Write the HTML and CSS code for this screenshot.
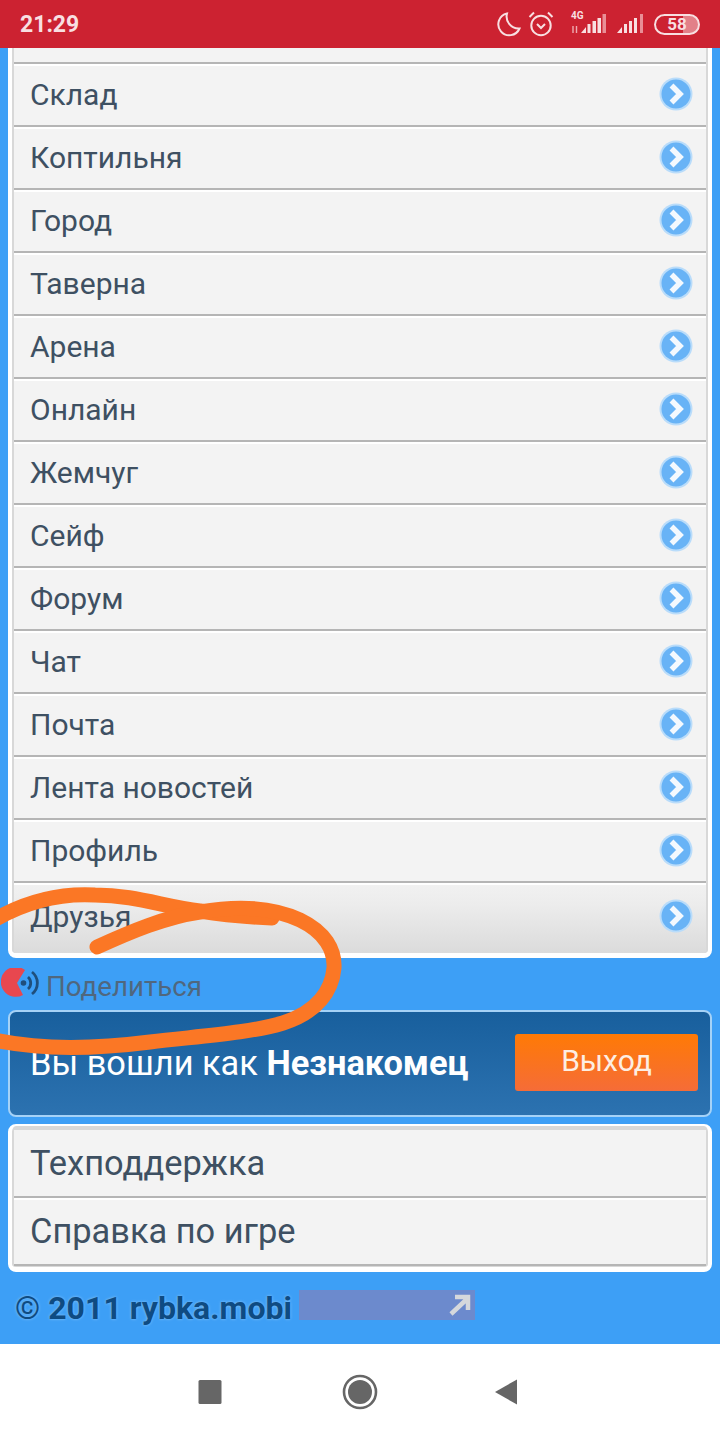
FILE: index.html
```html
<!DOCTYPE html>
<html>
<head>
    <title>rybka.mobi</title>
    <link rel="stylesheet" href="styles.css">
</head>
<body>
    <svg class="defs" width="0" height="0">
        <symbol id="chevron" viewBox="0 0 34 34">
            <circle cx="17" cy="17" r="16.5" fill="#b9dcfa"></circle>
            <circle cx="17" cy="17" r="14.5" fill="#68b3f6"></circle>
            <path d="M12.5 8.5 L21 17 L12.5 25.5" fill="none" stroke="#f4f9fe" stroke-width="5.5"></path>
        </symbol>
    </svg>

    <div class="status-bar">
        <span class="time">21:29</span>
        <div class="status-icons">
            <svg class="moon" width="26" height="26" viewBox="0 0 26 26">
                <path d="M11 2.5 A11 11 0 1 0 23.5 17.5 A12 12 0 0 1 11 2.5 Z" fill="none" stroke="#f8dfe1" stroke-width="2"></path>
            </svg>
            <svg class="alarm" width="26" height="28" viewBox="0 0 26 28">
                <circle cx="13" cy="15.5" r="9.7" fill="none" stroke="#f8dfe1" stroke-width="2"></circle>
                <path d="M9 14 L13 18 L17 14 M1.5 7 L6 2.5 M24.5 7 L20 2.5" fill="none" stroke="#f8dfe1" stroke-width="2"></path>
            </svg>
            <div class="net">
                <span class="net-label">4G</span>
                <svg width="36" height="26" viewBox="0 0 36 26">
                    <path d="M3 15 V22 M6.5 22 V15" stroke="#eeaab0" stroke-width="1.4"></path>
                    <path d="M11 22 L16 22 L16 16 Z M17.5 13 H20.5 V22 H17.5 Z M22.5 10 H26 V22 H22.5 Z M27.5 7 H31 V22 H27.5 Z" fill="#f8dfe1"></path>
                    <path d="M32.5 3 H36 V22 H32.5 Z" fill="#e98f97"></path>
                </svg>
            </div>
            <svg class="signal" width="28" height="26" viewBox="0 0 28 26">
                <path d="M1 22 L6 22 L6 16 Z M8 13 H11 V22 H8 Z M13 10 H16 V22 H13 Z M18 7 H21 V22 H18 Z" fill="#f8dfe1"></path>
                <path d="M24 3 H27 V22 H24 Z" fill="#e98f97"></path>
            </svg>
            <div class="battery"><span class="battery-level">58</span></div>
        </div>
    </div>

    <div class="content">
        <ul class="menu">
            <li class="menu-cut"></li>
            <li class="menu-item"><span>Склад</span><svg class="arrow"><use href="#chevron"></use></svg></li>
            <li class="menu-item"><span>Коптильня</span><svg class="arrow"><use href="#chevron"></use></svg></li>
            <li class="menu-item"><span>Город</span><svg class="arrow"><use href="#chevron"></use></svg></li>
            <li class="menu-item"><span>Таверна</span><svg class="arrow"><use href="#chevron"></use></svg></li>
            <li class="menu-item"><span>Арена</span><svg class="arrow"><use href="#chevron"></use></svg></li>
            <li class="menu-item"><span>Онлайн</span><svg class="arrow"><use href="#chevron"></use></svg></li>
            <li class="menu-item"><span>Жемчуг</span><svg class="arrow"><use href="#chevron"></use></svg></li>
            <li class="menu-item"><span>Сейф</span><svg class="arrow"><use href="#chevron"></use></svg></li>
            <li class="menu-item"><span>Форум</span><svg class="arrow"><use href="#chevron"></use></svg></li>
            <li class="menu-item"><span>Чат</span><svg class="arrow"><use href="#chevron"></use></svg></li>
            <li class="menu-item"><span>Почта</span><svg class="arrow"><use href="#chevron"></use></svg></li>
            <li class="menu-item"><span>Лента новостей</span><svg class="arrow"><use href="#chevron"></use></svg></li>
            <li class="menu-item"><span>Профиль</span><svg class="arrow"><use href="#chevron"></use></svg></li>
            <li class="menu-item menu-item-last"><span>Друзья</span><svg class="arrow"><use href="#chevron"></use></svg></li>
        </ul>

        <div class="share">
            <svg class="share-icon" width="38" height="32" viewBox="0 0 38 32">
                <path d="M24 2 A15 15 0 1 0 22 27 L16 15 Z" fill="#e8474f"></path>
                <circle cx="22.5" cy="15" r="2.8" fill="#1f4f7c"></circle>
                <path d="M27 9 A8 8 0 0 1 27 21 M31 4 A14 14 0 0 1 31 26" fill="none" stroke="#1f4f7c" stroke-width="2.8"></path>
            </svg>
            <span class="share-text">Поделиться</span>
        </div>

        <div class="login-box">
            <span class="login-text">Вы вошли как <b>Незнакомец</b></span>
            <span class="logout">Выход</span>
        </div>

        <ul class="menu help">
            <li class="help-item">Техподдержка</li>
            <li class="help-item">Справка по игре</li>
        </ul>

        <div class="footer">
            <span class="copyright">© 2011 rybka.mobi</span>
            <div class="counter">
                <svg width="24" height="22" viewBox="0 0 24 22">
                    <path d="M3 20 L19 5 M7 3 H20 V16" fill="none" stroke="#d5d8dc" stroke-width="4.5"></path>
                </svg>
            </div>
        </div>

        <svg class="scribble" width="720" height="200" viewBox="0 870 720 200">
            <path d="M-6 920 C25 902 60 893 95 895 C135 895 165 907 200 911 C225 915 250 917 272 918" fill="none" stroke="#fb7725" stroke-width="15" stroke-linecap="round"></path>
            <path d="M97 947 C130 932 165 917 200 912 C235 906 270 906 300 920 C325 932 335 950 334 968 C332 990 318 1012 283 1023 C250 1033 200 1036 150 1042 C95 1049 40 1050 -6 1040" fill="none" stroke="#fb7725" stroke-width="15" stroke-linecap="round"></path>
        </svg>
    </div>

    <div class="nav-bar">
        <svg width="24" height="26" viewBox="0 0 24 26">
            <rect x="0.5" y="1" width="23" height="24" rx="1.5" fill="#666"></rect>
        </svg>
        <svg width="36" height="36" viewBox="0 0 36 36">
            <circle cx="18" cy="18" r="16" fill="none" stroke="#666" stroke-width="2.6"></circle>
            <circle cx="18" cy="18" r="12" fill="#666"></circle>
        </svg>
        <svg class="nav-back" width="24" height="26" viewBox="0 0 24 26">
            <path d="M0 13 L22 0.5 V25.5 Z" fill="#666"></path>
        </svg>
    </div>
</body>
</html>
```

FILE: styles.css
```css
* {
    box-sizing: border-box;
}

body {
    margin: 0;
    width: 720px;
    height: 1440px;
    overflow: hidden;
    display: flex;
    flex-direction: column;
    font-family: Roboto, "Liberation Sans", sans-serif;
    background-color: #3d9ff6;
}

ul {
    list-style-type: none;
    margin: 0;
    padding: 0;
}

.defs {
    display: block;
    height: 0;
}

.status-bar {
    height: 48px;
    padding: 0 20px;
    display: flex;
    align-items: center;
    justify-content: space-between;
    background-color: #cc2231;
    color: #f8dfe1;
}

.time {
    font-size: 23px;
    font-weight: 700;
}

.status-icons {
    display: flex;
    align-items: center;
}

.moon {
    margin-right: 6px;
}

.alarm {
    margin-right: 16px;
}

.net {
    position: relative;
    width: 36px;
    height: 26px;
    margin-right: 10px;
}

.net-label {
    position: absolute;
    left: 1px;
    top: 0;
    font-size: 10px;
    font-weight: 700;
    line-height: 10px;
}

.signal {
    margin-right: 10px;
}

.battery {
    width: 46px;
    height: 21px;
    border: 2px solid #f8dfe1;
    border-radius: 11px;
    background: linear-gradient(to right, transparent 64%, #e28088 64%);
    text-align: center;
    font-size: 17px;
    font-weight: 700;
    line-height: 17px;
}

.content {
    position: relative;
    height: 1296px;
}

.menu {
    margin: 0 8px;
    border: solid #fff;
    border-width: 0 4px 5px;
    border-radius: 0 0 8px 8px;
    background-color: #d8d8d8;
    padding: 0 2px;
}

.menu-cut {
    height: 16px;
    border-bottom: 2px solid #b5b5b5;
    background-color: #f3f3f3;
}

.menu-item {
    height: 63px;
    padding: 0 13px 3px 16px;
    display: flex;
    align-items: center;
    justify-content: space-between;
    border-top: 2px solid #fff;
    border-bottom: 2px solid #b5b5b5;
    background-color: #f3f3f3;
    color: #3e5062;
    font-size: 30px;
}

.menu-item-last {
    height: 70px;
    padding-bottom: 6px;
    border-bottom: none;
    background: linear-gradient(to bottom, #f1f1f1, #ececec 30%, #dbdbdb);
}

.arrow {
    width: 34px;
    height: 34px;
    filter: blur(0.5px);
}

.share {
    height: 52px;
    padding: 4px 0 0 1px;
    display: flex;
    align-items: center;
}

.share-icon {
    margin-bottom: 4px;
    filter: blur(0.4px);
}

.share-text {
    margin-left: 7px;
    color: #50677e;
    font-size: 27.7px;
}

.login-box {
    height: 107px;
    margin: 0 8px;
    padding: 0 12px 2px 20px;
    display: flex;
    align-items: center;
    justify-content: space-between;
    border: 2px solid #a5d2f7;
    border-radius: 8px;
    background: linear-gradient(to bottom, #185f9d, #2c72b0);
    color: #fff;
    font-size: 34.4px;
}

.logout {
    width: 183px;
    height: 57px;
    border-radius: 3px;
    background: linear-gradient(to bottom, #ff7a05, #f56c38);
    color: #fdeee2;
    font-size: 30px;
    line-height: 54px;
    text-align: center;
}

.help {
    margin-top: 7px;
    padding-top: 4px;
    padding-bottom: 1px;
    border-width: 2px 4px 5px;
    border-radius: 8px;
}

.help-item {
    height: 68px;
    padding: 0 0 2px 16px;
    display: flex;
    align-items: center;
    border-top: 2px solid #fff;
    border-bottom: 2px solid #b5b5b5;
    background-color: #f3f3f3;
    color: #3e5062;
    font-size: 34.4px;
}

.help-item:first-child {
    padding-bottom: 0;
    border-top: none;
}

.footer {
    margin-top: 18px;
    padding-left: 15px;
    display: flex;
    align-items: flex-start;
}

.copyright {
    color: #0e4b82;
    font-size: 32.1px;
    font-weight: 700;
    line-height: 36px;
    text-shadow: 0 0 3px #8cc6f7;
}

.counter {
    width: 176px;
    height: 30px;
    margin-left: 7px;
    padding: 4px 3px 0 0;
    display: flex;
    justify-content: flex-end;
    background-color: #6c8acd;
}

.scribble {
    position: absolute;
    left: 0;
    top: 822px;
}

.nav-bar {
    height: 96px;
    padding-left: 198px;
    display: flex;
    align-items: center;
    gap: 120px;
    background-color: #fff;
}

.nav-back {
    margin-left: -3px;
}
```
